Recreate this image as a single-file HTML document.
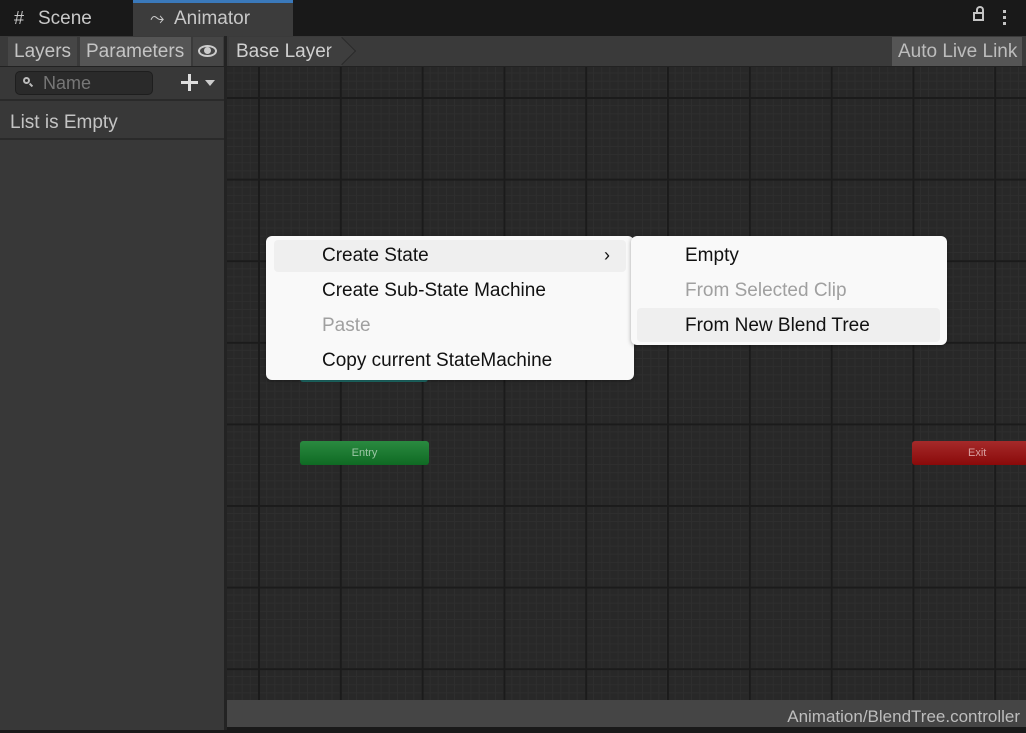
<!DOCTYPE html>
<html><head><style>
*{margin:0;padding:0;box-sizing:border-box}
body{width:1026px;height:730px;background:#191919;font-family:"Liberation Sans",sans-serif;position:relative;overflow:hidden;color:#c4c4c4}
.a{position:absolute}
.grid{left:227px;top:67px;width:799px;height:633px;background-color:#282828;
background-image:
linear-gradient(90deg,#1b1b1b 2px,transparent 2px),
linear-gradient(#1b1b1b 2px,transparent 2px),
linear-gradient(90deg,#2e2e2e 1px,transparent 1px),
linear-gradient(#2e2e2e 1px,transparent 1px);
background-size:81.8px 81.6px,81.8px 81.6px,8.18px 8.16px,8.18px 8.16px;
background-position:31px 30px,31px 30px,31px 30px,31px 30px}
.menu{background:#f9f9f9;border-radius:6px;box-shadow:0 1px 4px rgba(0,0,0,.35);color:#111;font-size:19px}
.it{position:absolute;left:56px;height:35px;line-height:35px}
</style></head><body>
<!-- tabs -->
<div class="a" style="left:14px;top:8px;font-size:18px;color:#c8c8c8">#</div>
<div class="a" style="left:38px;top:8px;font-size:19px;color:#c8c8c8">Scene</div>
<div class="a" style="left:133px;top:0;width:160px;height:36px;background:#3c3c3c;border-top:3px solid #3a79bb"></div>
<div class="a" style="left:150px;top:8px;font-size:18px;color:#c8c8c8">⤳</div>
<div class="a" style="left:174px;top:8px;font-size:19px;color:#c8c8c8">Animator</div>
<div class="a" style="left:973px;top:12px;width:11px;height:9px;border:2px solid #c4c4c4"></div>
<div class="a" style="left:976px;top:6px;width:8px;height:7px;border:2px solid #c4c4c4;border-bottom:none;border-radius:4px 4px 0 0"></div>
<div class="a" style="left:1003px;top:10px;width:3px;height:3px;background:#c4c4c4;box-shadow:0 6px #c4c4c4,0 12px #c4c4c4"></div>
<!-- toolbar -->
<div class="a" style="left:0;top:36px;width:1026px;height:31px;background:#3a3a3a;border-bottom:1px solid #222"></div>
<div class="a" style="left:8px;top:37px;width:69px;height:29px;background:#464646;font-size:19px;line-height:29px;padding-left:6px">Layers</div>
<div class="a" style="left:80px;top:37px;width:111px;height:29px;background:#555;font-size:19px;line-height:29px;padding-left:6px">Parameters</div>
<div class="a" style="left:193px;top:37px;width:30px;height:29px;background:#464646"></div>
<div class="a" style="left:198px;top:45px;width:19px;height:12px;border:2px solid #ccc;border-radius:50%"></div>
<div class="a" style="left:204px;top:47px;width:7px;height:7px;background:#ccc;border-radius:50%"></div>
<div class="a" style="left:229px;top:37px;width:113px;height:29px;background:#3e3e3e;font-size:19px;line-height:29px;padding-left:7px;color:#d0d0d0">Base Layer</div>
<div class="a" style="left:332px;top:41px;width:20px;height:20px;border-right:1px solid #2a2a2a;border-top:1px solid #2a2a2a;transform:rotate(45deg);background:#3e3e3e"></div>
<div class="a" style="left:892px;top:37px;width:130px;height:29px;background:#555;font-size:19px;line-height:29px;padding-left:6px;color:#bdbdbd">Auto Live Link</div>
<!-- left panel -->
<div class="a" style="left:0;top:67px;width:224px;height:663px;background:#383838"></div>
<div class="a" style="left:224px;top:36px;width:3px;height:694px;background:#232323"></div>
<div class="a" style="left:15px;top:71px;width:138px;height:24px;background:#2a2a2a;border:1px solid #1e1e1e;border-radius:5px"></div>
<div class="a" style="left:23px;top:77px;width:7px;height:7px;border:2px solid #bbb;border-radius:50%"></div>
<div class="a" style="left:29px;top:84px;width:4px;height:2px;background:#bbb;transform:rotate(45deg)"></div>
<div class="a" style="left:43px;top:73px;font-size:18px;color:#777">Name</div>
<div class="a" style="left:188px;top:74px;width:3px;height:17px;background:#ddd"></div>
<div class="a" style="left:181px;top:81px;width:17px;height:3px;background:#ddd"></div>
<div class="a" style="left:205px;top:80px;border-left:5px solid transparent;border-right:5px solid transparent;border-top:6px solid #ccc"></div>
<div class="a" style="left:0;top:99px;width:224px;height:2px;background:#2a2a2a"></div>
<div class="a" style="left:10px;top:112px;font-size:19px;color:#c4c4c4">List is Empty</div>
<div class="a" style="left:0;top:138px;width:224px;height:2px;background:#2a2a2a"></div>
<!-- graph -->
<div class="a grid"></div>
<div class="a" style="left:300px;top:370px;width:128px;height:12px;background:#1f6e6a;border-radius:3px"></div>
<div class="a" style="left:300px;top:441px;width:129px;height:24px;background:linear-gradient(#2a8a40,#0f6a23);border-radius:3px;font-size:11px;line-height:24px;text-align:center;color:#9cc7a5">Entry</div>
<div class="a" style="left:912px;top:441px;width:120px;height:24px;background:linear-gradient(#a52a2a,#8a0a0a);border-radius:3px;font-size:11px;line-height:24px;padding-left:56px;color:#d9a0a0">Exit</div>
<!-- status -->
<div class="a" style="left:227px;top:700px;width:799px;height:27px;background:#454545;font-size:17px;line-height:33px;text-align:right;padding-right:6px;color:#bdbdbd">Animation/BlendTree.controller</div>
<!-- menus -->
<div class="a menu" style="left:266px;top:236px;width:368px;height:144px">
<div class="a" style="left:8px;top:4px;width:352px;height:32px;background:#efefef;border-radius:4px"></div>
<div class="it" style="top:2px">Create State</div>
<div class="a" style="left:338px;top:2px;line-height:35px;font-size:18px">›</div>
<div class="it" style="top:37px">Create Sub-State Machine</div>
<div class="it" style="top:72px;color:#a0a0a0">Paste</div>
<div class="it" style="top:107px">Copy current StateMachine</div>
</div>
<div class="a menu" style="left:631px;top:236px;width:316px;height:109px">
<div class="a" style="left:6px;top:72px;width:303px;height:34px;background:#efefef;border-radius:4px"></div>
<div class="it" style="top:2px;left:54px">Empty</div>
<div class="it" style="top:37px;left:54px;color:#a0a0a0">From Selected Clip</div>
<div class="it" style="top:72px;left:54px">From New Blend Tree</div>
</div>
</body></html>
